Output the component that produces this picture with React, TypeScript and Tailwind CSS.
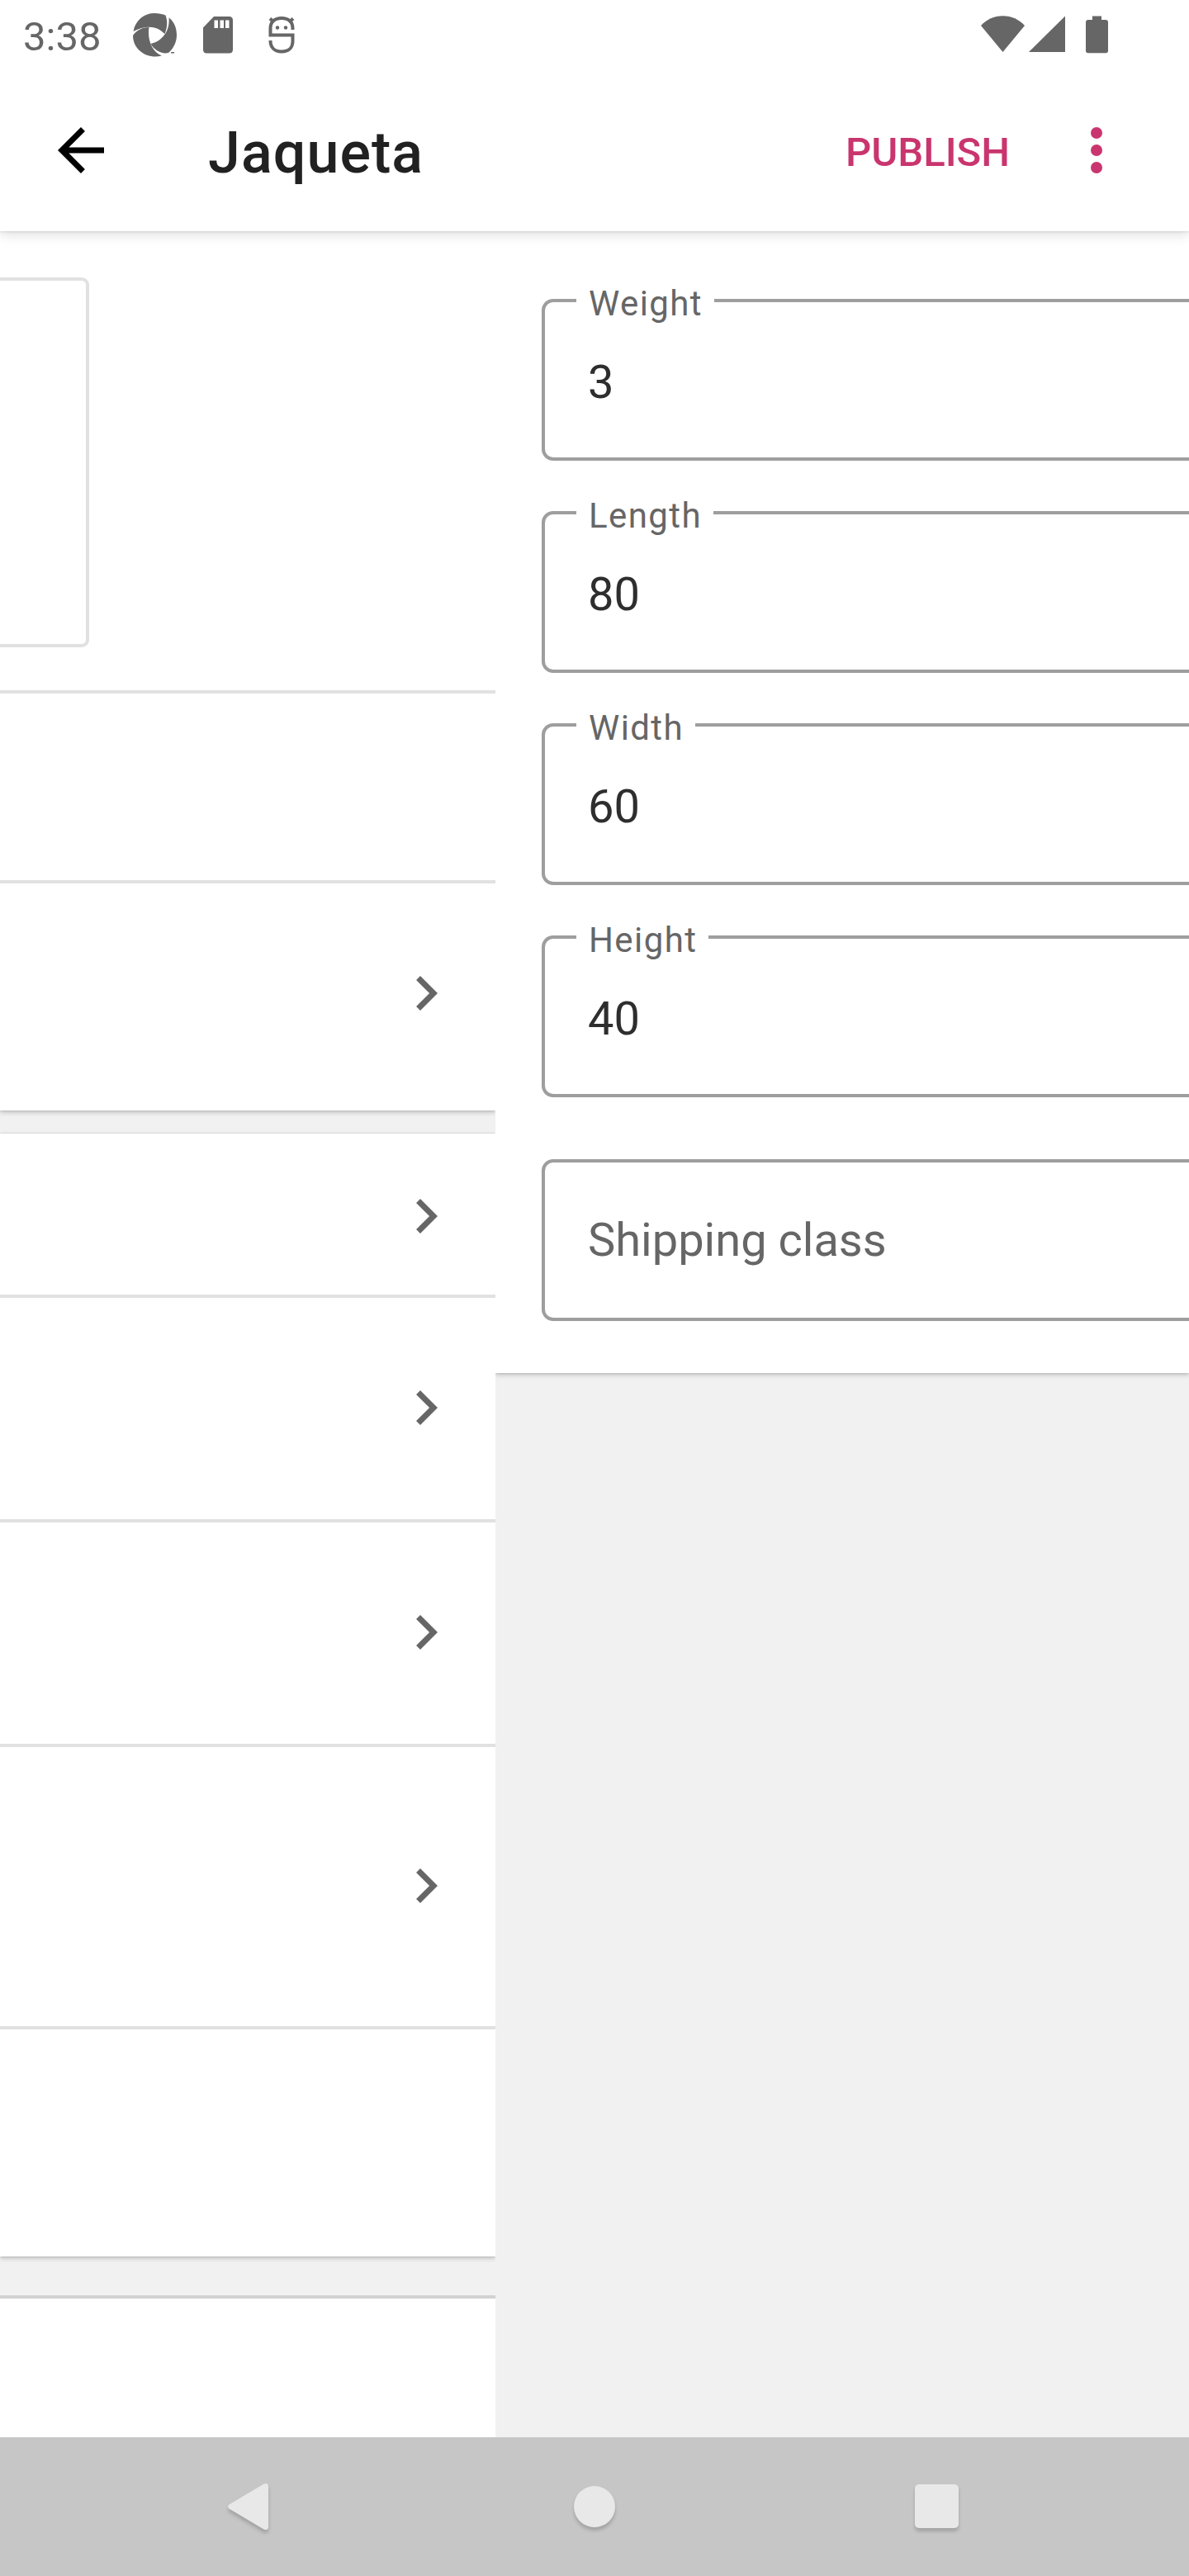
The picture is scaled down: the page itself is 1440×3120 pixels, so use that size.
function Chevron() {
  return (
    <svg className="size-[84px] shrink-0" viewBox="0 0 24 24" fill="#666666">
      <path d="M10 6L8.59 7.41 13.17 12l-4.58 4.59L10 18l6-6z" />
    </svg>
  );
}

function StatusBar() {
  return (
    <div className="relative z-20 flex h-[84px] w-full shrink-0 items-start justify-between bg-white text-[#666666]">
      <div className="flex items-start">
        <div className="ml-[28px] mt-[16px] h-[57px] w-[133px] text-[49px] leading-[57px]">3:38</div>
        <svg className="mt-[16px] h-[53px] w-[54px]" viewBox="0 0 54 53" fill="currentColor">
          <path d="M0.5 22C3 8 14 0 26 0C31 0 36 1 39.500 2.500C42 9 42 17 38.500 25C29 15 16 14 0.500 22Z" />
          <path d="M43.500 5.500C50 10 53 18 53 26.500C53 35 49 43 43 48C35 50 26 45 21.500 37C35 34 45 22 43.500 5.500Z" />
          <path d="M0 27C5 20 12 17 19.500 17C17 31 23 47 35 51.500C18 56 0 45 0 27Z" />
          <rect x="46" y="47" width="4" height="1.500" />
        </svg>
        <svg className="ml-[31px] mt-[20px] h-[45px] w-[36px]" viewBox="0 0 36 45" fill="currentColor">
          <path fillRule="evenodd" d="M13 0H31.500Q36 0 36 4.500V40Q36 44.500 31.500 44.500H4.500Q0 44.500 0 40V13.500ZM13.500 4.500V14H18V4.500ZM20.500 4.500V14H25V4.500ZM27 4.500V14H31.500V4.500Z" />
        </svg>
        <svg className="ml-[43px] mt-[20px] h-[45px] w-[32px]" viewBox="0 0 32 45" fill="none" stroke="currentColor" strokeWidth="4">
          <path d="M29.500 16V14.500C29.500 6 24 2 16 2S2.500 6 2.500 14.500V22.500H29.500V30C29.500 38 24 42.500 16 42.500S2.500 38 2.500 29" />
          <path d="M2 2.500L7 7M30 2.500L25 7" />
          <circle cx="11" cy="13.500" r="2.200" fill="currentColor" stroke="none" />
          <circle cx="21" cy="13.500" r="2.200" fill="currentColor" stroke="none" />
        </svg>
      </div>
      <div className="mr-[98px] mt-[19px] flex items-start">
        <svg className="h-[44px] w-[53px]" viewBox="0 0 53 44" fill="currentColor">
          <path d="M0 12C7 4.500 16 0.300 26.500 0.300S46 4.500 53 12L26.500 44Z" />
        </svg>
        <svg className="ml-[5px] h-[44px] w-[44px]" viewBox="0 0 44 44" fill="currentColor">
          <path d="M44 0.500V44H0Z" />
        </svg>
        <svg className="ml-[25px] h-[46px] w-[27px]" viewBox="0 0 27 46" fill="currentColor">
          <path d="M8 0.500H19V5H24Q27 5 27 8V42.500Q27 45.300 24 45.300H3Q0 45.300 0 42.500V8Q0 5 3 5H8Z" />
        </svg>
      </div>
    </div>
  );
}

function AppBar() {
  return (
    <header className="relative z-10 flex h-[196px] w-full shrink-0 items-start bg-white shadow-[0_4px_14px_rgba(0,0,0,0.13),0_1px_3px_rgba(0,0,0,0.1)]">
      <svg className="ml-[56px] mt-[56px] size-[84px]" viewBox="0 0 24 24" fill="#000000">
        <path d="M20 11H7.830l5.590-5.590L12 4l-8 8 8 8 1.410-1.410L7.830 13H20v-2z" />
      </svg>
      <h1 className="ml-[112px] mt-[60px] h-[82px] text-[70px] font-medium leading-[82px] tracking-[1.05px] text-[#212121]">Jaqueta</h1>
      <div className="ml-auto mr-[98px] mt-[72px] text-[49px] font-medium leading-[57px] text-[#c9356e]">PUBLISH</div>
      <div className="mr-[105px] mt-[70px] flex flex-col gap-[7px]">
        <span className="size-[14px] rounded-full bg-[#c9356e]" />
        <span className="size-[14px] rounded-full bg-[#c9356e]" />
        <span className="size-[14px] rounded-full bg-[#c9356e]" />
      </div>
    </header>
  );
}

const cardShadow = "shadow-[0_3px_5px_rgba(0,0,0,0.16),0_0_3px_rgba(0,0,0,0.18)]";

function ProductPanel() {
  return (
    <section className="flex w-[600px] shrink-0 flex-col overflow-hidden bg-[#f1f1f1]">
      <div className={`${cardShadow} flex h-[1065px] shrink-0 flex-col bg-white`}>
        <div className="flex h-[560px] border-b-4 border-[#e1e1e1] pt-[56px]">
          <div className="h-[448px] w-[108px] rounded-r-[9px] border-4 border-l-0 border-[#e1e1e1]" />
        </div>
        <div className="h-[230px] border-b-4 border-[#e1e1e1]" />
        <div className="flex h-[266px] items-center justify-end pr-[42px]"><Chevron /></div>
      </div>
      <div className={`${cardShadow} mt-[28px] flex h-[1360px] shrink-0 flex-col bg-white`}>
        <div className="flex h-[199px] items-start justify-end border-b-4 border-[#e1e1e1] pr-[42px] pt-[58px]"><Chevron /></div>
        <div className="flex h-[272px] items-start justify-end border-b-4 border-[#e1e1e1] pr-[42px] pt-[91px]"><Chevron /></div>
        <div className="flex h-[272px] items-start justify-end border-b-4 border-[#e1e1e1] pr-[42px] pt-[91px]"><Chevron /></div>
        <div className="flex h-[342px] items-start justify-end border-b-4 border-[#e1e1e1] pr-[42px] pt-[126px]"><Chevron /></div>
      </div>
      <div className="mt-[47px] flex-1 border-t-4 border-[#d2d2d2] bg-white" />
    </section>
  );
}

function Field({ label, value }: { label: string; value: string }) {
  return (
    <div className="relative h-[196px] w-[840px] shrink-0 rounded-l-[14px] border-4 border-r-0 border-[#9e9e9e]">
      <div className="absolute -top-[23px] left-[38px] h-[50px] bg-white pl-[15px] pr-[14px] text-[42px] leading-[50px] tracking-[1.4px] text-[#666666]">{label}</div>
      <div className="pl-[52px] pt-[64px] text-[56px] leading-[66px] text-[#2e2e2e]">{value}</div>
    </div>
  );
}

function ShippingPanel() {
  return (
    <section className="flex flex-1 flex-col overflow-hidden bg-[#f1f1f1]">
      <div className={`${cardShadow} flex h-[1383px] shrink-0 flex-col gap-[61px] bg-white pl-[56px] pt-[82px]`}>
        <Field label="Weight" value="3" />
        <Field label="Length" value="80" />
        <Field label="Width" value="60" />
        <Field label="Height" value="40" />
        <div className="mt-[14px] h-[196px] w-[840px] shrink-0 rounded-l-[14px] border-4 border-r-0 border-[#9e9e9e] pl-[52px] pt-[61px] text-[56px] leading-[66px] text-[#666666]">
          Shipping class
        </div>
      </div>
    </section>
  );
}

function NavBar() {
  return (
    <nav className="flex h-[168px] w-full shrink-0 items-start bg-[#c6c6c6]">
      <svg className="ml-[276px] mt-[55px] h-[64px] w-[54px] overflow-visible drop-shadow-[0_4px_2px_rgba(0,0,0,0.18)]" viewBox="0 0 54 64">
        <path d="M1.500 26.500L43.500 1.500Q49 -0.500 49 5V53Q49 58.500 43.500 56.500L1.500 31.500Q-1.200 29 1.500 26.500Z" fill="#e8e8e8" />
      </svg>
      <div className="ml-[365px] mt-[59px] size-[50px] rounded-full bg-[#e8e8e8] shadow-[0_4px_4px_rgba(0,0,0,0.18)]" />
      <div className="ml-[363px] mt-[57px] size-[53px] rounded-[5px] bg-[#e8e8e8] shadow-[0_4px_4px_rgba(0,0,0,0.18)]" />
    </nav>
  );
}

export default function App() {
  return (
    <div className="flex h-[3120px] w-[1440px] flex-col overflow-hidden bg-white font-['Roboto',sans-serif]">
      <StatusBar />
      <AppBar />
      <main className="flex min-h-0 flex-1">
        <ProductPanel />
        <ShippingPanel />
      </main>
      <NavBar />
    </div>
  );
}
